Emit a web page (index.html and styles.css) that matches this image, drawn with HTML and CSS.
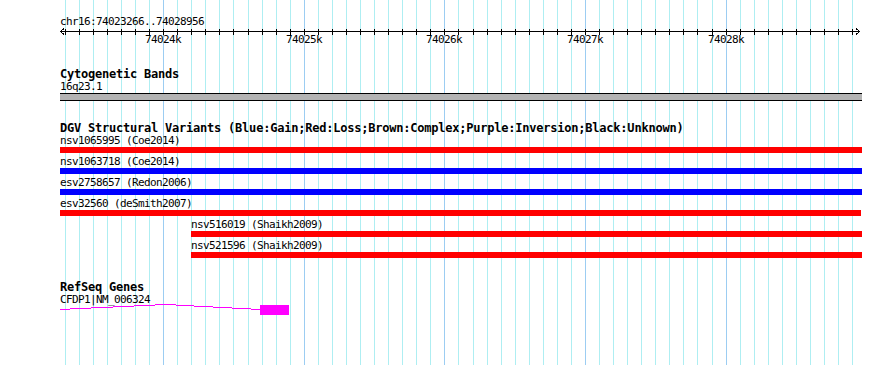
FILE: index.html
```html
<!DOCTYPE html>
<html>
<head>
    <title>chr16:74023266..74028956</title>
    <link rel="stylesheet" href="styles.css">
</head>
<body>
    <div class="browser">
        <svg class="grid" id="grid" width="890" height="365"></svg>

        <div class="tracks">
            <!-- ruler -->
            <div class="ruler">
                <div class="feature-label">chr16:74023266..74028956</div>
                <svg class="axis" id="axis" width="802" height="7">
                    <rect x="0" y="3" width="800" height="1" fill="#000"></rect>
                    <path d="M4 0.5 L0.5 3.5 L4 6.5" fill="none" stroke="#000" shape-rendering="crispEdges"></path>
                    <path d="M796 0.5 L799.5 3.5 L796 6.5" fill="none" stroke="#000" shape-rendering="crispEdges"></path>
                </svg>
                <div class="ruler-labels" id="rulerLabels"></div>
            </div>

            <!-- cytoband track -->
            <div class="track cyto">
                <div class="track-title">Cytogenetic Bands</div>
                <div class="feature-label">16q23.1</div>
                <div class="band"></div>
            </div>

            <!-- DGV track -->
            <div class="track dgv">
                <div class="track-title">DGV Structural Variants (Blue:Gain;Red:Loss;Brown:Complex;Purple:Inversion;Black:Unknown)</div>
                <div class="sv" style="margin-left: 0px; width: 802px;">
                    <div class="feature-label">nsv1065995 (Coe2014)</div>
                    <div class="bar loss"></div>
                </div>
                <div class="sv" style="margin-left: 0px; width: 802px;">
                    <div class="feature-label">nsv1063718 (Coe2014)</div>
                    <div class="bar gain"></div>
                </div>
                <div class="sv" style="margin-left: 0px; width: 802px;">
                    <div class="feature-label">esv2758657 (Redon2006)</div>
                    <div class="bar gain"></div>
                </div>
                <div class="sv" style="margin-left: 0px; width: 801px;">
                    <div class="feature-label">esv32560 (deSmith2007)</div>
                    <div class="bar loss"></div>
                </div>
                <div class="sv" style="margin-left: 131px; width: 671px;">
                    <div class="feature-label">nsv516019 (Shaikh2009)</div>
                    <div class="bar loss"></div>
                </div>
                <div class="sv" style="margin-left: 131px; width: 671px;">
                    <div class="feature-label">nsv521596 (Shaikh2009)</div>
                    <div class="bar loss"></div>
                </div>
            </div>

            <!-- RefSeq track -->
            <div class="track refseq">
                <div class="track-title">RefSeq Genes</div>
                <div class="feature-label">CFDP1|NM_006324</div>
                <svg class="gene" width="802" height="13">
                    <polyline points="0,6.5 106,1.5 200,6.5" fill="none" stroke="#ff00ff" shape-rendering="crispEdges"></polyline>
                    <rect x="200" y="2" width="29" height="10" fill="#ff00ff"></rect>
                </svg>
            </div>
        </div>
    </div>

    <script>
        // draw grid lines, ruler ticks and labels from the genomic range
        const start = 74023266, end = 74028956;
        const trackLeft = 60, trackWidth = 800;
        const scale = trackWidth / (end - start);
        const ns = 'http://www.w3.org/2000/svg';

        function toPx(pos) {
            return Math.round((pos - start) * scale);
        }

        const grid = document.getElementById('grid');
        const axis = document.getElementById('axis');
        const labels = document.getElementById('rulerLabels');

        for (let pos = Math.ceil(start / 100) * 100; pos <= end; pos += 100) {
            const x = toPx(pos);
            const major = pos % 1000 === 0;

            let line = document.createElementNS(ns, 'rect');
            line.setAttribute('x', trackLeft + x);
            line.setAttribute('y', 0);
            line.setAttribute('width', 1);
            line.setAttribute('height', 365);
            line.setAttribute('class', major ? 'grid-major' : 'grid-minor');
            grid.appendChild(line);

            let tick = document.createElementNS(ns, 'rect');
            tick.setAttribute('x', x);
            tick.setAttribute('y', 1);
            tick.setAttribute('width', 1);
            tick.setAttribute('height', 6);
            tick.setAttribute('fill', '#000');
            axis.appendChild(tick);

            if (major) {
                let label = document.createElement('span');
                label.className = 'ruler-label';
                label.textContent = (pos / 1000) + 'k';
                label.style.left = (x - 18) + 'px';
                labels.appendChild(label);
            }
        }
    </script>
</body>
</html>
```

FILE: styles.css
```css
body {
    margin: 0;
    background-color: #ffffff;
    color: #000;
    overflow: hidden;
}
.browser {
    position: relative;
    width: 890px;
    height: 365px;
    overflow: hidden;
    background-color: #ffffff;
}
.grid {
    position: absolute;
    top: 0;
    left: 0;
}
.grid-minor {
    fill: #aeeef2; /* light cyan grid */
}
.grid-major {
    fill: #9ccdf2; /* blue grid every kb */
}
.tracks {
    position: relative;
    display: flex;
    flex-direction: column;
    margin-left: 60px;
    width: 802px;
}
.feature-label {
    font-family: "DejaVu Sans Mono", monospace;
    font-size: 11px;
    letter-spacing: -0.62px;
    line-height: 12px;
    height: 12px;
    white-space: nowrap;
}
.track-title {
    font-family: "DejaVu Sans Mono", monospace;
    font-weight: bold;
    font-size: 12px;
    letter-spacing: -0.22px;
    line-height: 13px;
    height: 13px;
    white-space: nowrap;
}
.ruler {
    padding-top: 16px;
}
.axis {
    display: block;
}
.ruler-labels {
    position: relative;
    height: 12px;
    margin-top: -1px;
}
.ruler-label {
    position: absolute;
    top: 0;
    font-family: "DejaVu Sans Mono", monospace;
    font-size: 11px;
    letter-spacing: -0.62px;
    line-height: 12px;
    white-space: nowrap;
}
.track {
    display: flex;
    flex-direction: column;
}
.cyto {
    margin-top: 22px;
}
.dgv {
    margin-top: 21px;
}
.refseq {
    margin-top: 20px;
}
.band {
    height: 6px;
    background-color: #b3b3b3;
    border-top: 1px solid #000;
    border-bottom: 1px solid #000;
}
.sv {
    margin-bottom: 3px;
}
.bar {
    height: 6px;
}
.bar.loss {
    background-color: #ff0000;
}
.bar.gain {
    background-color: #0000ff;
}
.gene {
    display: block;
    margin-top: -3px;
}
```
